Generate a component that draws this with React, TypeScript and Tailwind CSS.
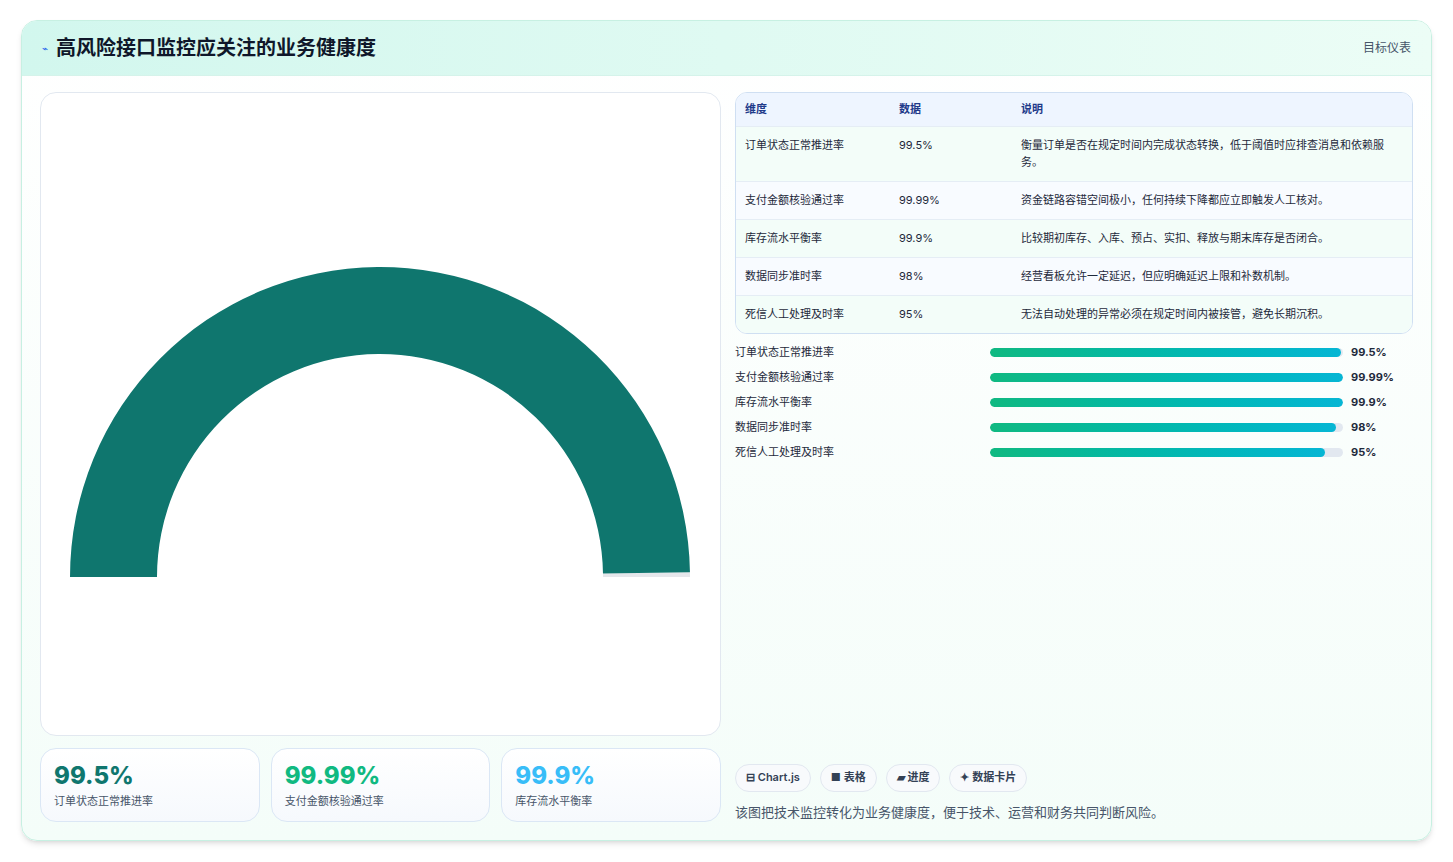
const rows = [
  { name: "订单状态正常推进率", value: "99.5%", pct: 99.5, desc: "衡量订单是否在规定时间内完成状态转换，低于阈值时应排查消息和依赖服务。" },
  { name: "支付金额核验通过率", value: "99.99%", pct: 99.99, desc: "资金链路容错空间极小，任何持续下降都应立即触发人工核对。" },
  { name: "库存流水平衡率", value: "99.9%", pct: 99.9, desc: "比较期初库存、入库、预占、实扣、释放与期末库存是否闭合。" },
  { name: "数据同步准时率", value: "98%", pct: 98, desc: "经营看板允许一定延迟，但应明确延迟上限和补数机制。" },
  { name: "死信人工处理及时率", value: "95%", pct: 95, desc: "无法自动处理的异常必须在规定时间内被接管，避免长期沉积。" },
];

function Gauge() {
  const cx = 379, cy = 576, ro = 310, ri = 223;
  const a = Math.PI * (1 - 0.995);
  const p = (r: number, t: number) => `${cx + r * Math.cos(Math.PI - t)} ${cy - r * Math.sin(Math.PI - t)}`;
  const end = Math.PI - a;
  const fill = `M ${p(ro, 0)} A ${ro} ${ro} 0 0 1 ${p(ro, end)} L ${p(ri, end)} A ${ri} ${ri} 0 0 0 ${p(ri, 0)} Z`;
  const rest = `M ${p(ro, end)} A ${ro} ${ro} 0 0 1 ${p(ro, Math.PI)} L ${p(ri, Math.PI)} A ${ri} ${ri} 0 0 0 ${p(ri, end)} Z`;
  return (
    <svg width="680" height="643" viewBox="40 92 680 643" className="block">
      <path d={rest} fill="#e5e7eb" />
      <path d={fill} fill="#0f766e" />
    </svg>
  );
}

export default function App() {
  return (
    <div className="min-h-screen bg-white p-5 pl-[21px] pr-[21px]" style={{ fontFamily: "Inter, 'Noto Sans CJK SC', sans-serif" }}>
      <div className="rounded-2xl border border-[#c7f0e2] bg-gradient-to-b from-white to-[#f4fdf9] shadow-md overflow-hidden h-[821px] flex flex-col">
        <div className="h-[55px] shrink-0 flex items-center justify-between px-5 bg-gradient-to-r from-[#d2f7ee] to-[#ecfdf6] border-b border-[#d5f3ea]">
          <div className="flex items-center gap-2">
            <span className="text-[#2563eb] text-[10px]">⌁</span>
            <h1 className="text-[20px] font-bold text-[#0f172a]">高风险接口监控应关注的业务健康度</h1>
          </div>
          <span className="text-[12px] text-[#475569]">目标仪表</span>
        </div>
        <div className="flex-1 flex gap-[14px] px-[18px] pt-[16px] pb-[18px]">
          <div className="w-[681px] flex flex-col gap-[12px]">
            <div className="h-[644px] rounded-2xl border border-[#e2e8f0] bg-white overflow-hidden">
              <Gauge />
            </div>
            <div className="grid grid-cols-3 gap-[11px]">
              {[["99.5%", "text-[#0f766e]", 0], ["99.99%", "text-[#10b981]", 1], ["99.9%", "text-[#38bdf8]", 2]].map(([v, c, i]) => (
                <div key={v as string} className="h-[74px] rounded-2xl border border-[#dbe7f5] bg-gradient-to-b from-white to-[#f6f9fd] px-[13px] pt-[12px]">
                  <div className={`text-[24px] leading-[30px] font-extrabold ${c}`}>{v}</div>
                  <div className="text-[11px] text-[#475569] mt-[2px]">{rows[i as number].name}</div>
                </div>
              ))}
            </div>
          </div>
          <div className="flex-1 flex flex-col">
            <div className="rounded-xl border border-[#cfdff2] overflow-hidden bg-white">
              <table className="w-full text-[11px] text-[#1e293b]">
                <thead>
                  <tr className="bg-[#eef5ff] text-[#1e3a8a] font-semibold h-[33px] text-left">
                    <th className="pl-[9px] w-[163px] font-semibold">维度</th>
                    <th className="w-[122px] font-semibold">数据</th>
                    <th className="font-semibold">说明</th>
                  </tr>
                </thead>
                <tbody>
                  {rows.map((r, i) => (
                    <tr key={r.name} className={`border-t border-[#e5edf5] align-top ${i % 2 ? "bg-[#f8fbff]" : "bg-[#f3fdf9]"}`}>
                      <td className="pl-[9px] py-[10px]">{r.name}</td>
                      <td className="py-[10px]">{r.value}</td>
                      <td className="py-[10px] pr-[10px] leading-[17px]">{r.desc}</td>
                    </tr>
                  ))}
                </tbody>
              </table>
            </div>
            <div className="mt-[12px] flex flex-col gap-[11px]">
              {rows.map((r) => (
                <div key={r.name} className="flex items-center h-[14px] text-[11px] text-[#1e293b]">
                  <span className="w-[255px]">{r.name}</span>
                  <div className="w-[353px] h-[9px] rounded-full bg-[#e2e8f0] overflow-hidden">
                    <div className="h-full rounded-full bg-gradient-to-r from-[#10b981] to-[#06b6d4]" style={{ width: `${r.pct}%` }} />
                  </div>
                  <span className="ml-[8px] font-bold">{r.value}</span>
                </div>
              ))}
            </div>
            <div className="mt-auto flex gap-[9px]">
              {["⊟ Chart.js", "■ 表格", "▰ 进度", "✦ 数据卡片"].map((t) => (
                <span key={t} className="h-[28px] px-[10px] flex items-center rounded-full border border-[#e2e8f0] bg-[#f8fafc] text-[11px] font-semibold text-[#334155]">{t}</span>
              ))}
            </div>
            <p className="mt-[11px] text-[13px] text-[#475569]">该图把技术监控转化为业务健康度，便于技术、运营和财务共同判断风险。</p>
          </div>
        </div>
      </div>
    </div>
  );
}
